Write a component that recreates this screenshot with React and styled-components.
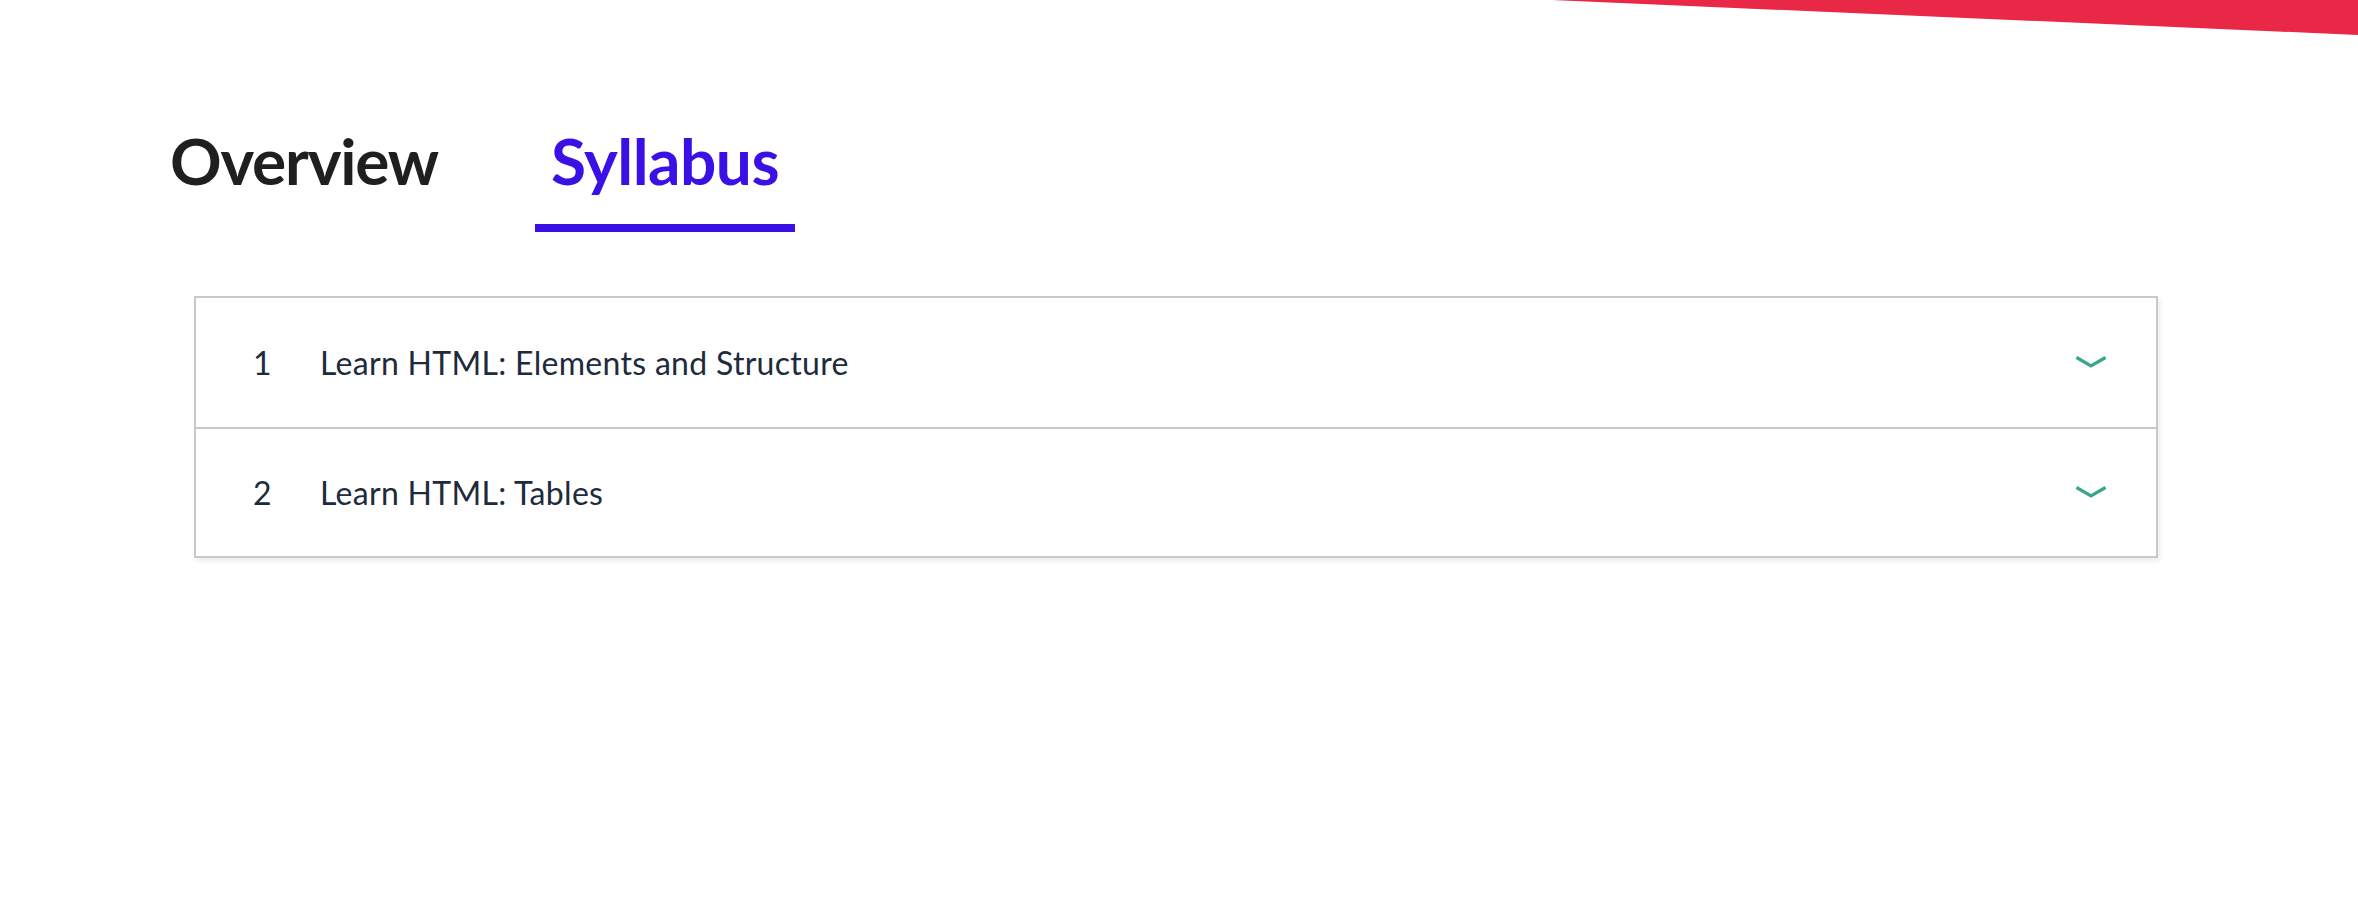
import React from "react";
import styled, { createGlobalStyle } from "styled-components";

const GlobalStyle = createGlobalStyle`
  html, body {
    margin: 0;
    padding: 0;
    background: #ffffff;
    font-family: "Lato", "Liberation Sans", sans-serif;
  }
  * { box-sizing: border-box; }
`;

const Page = styled.div`
  position: relative;
  width: 2358px;
  min-height: 914px;
  overflow: hidden;
  background: #ffffff;
`;

const Slash = styled.svg`
  position: absolute;
  top: 0;
  right: 0;
  display: block;
`;

const Content = styled.main`
  padding: 123px 0 0 154px;
`;

const TabBar = styled.nav`
  display: flex;
  align-items: flex-start;
  gap: 81px;
`;

const Tab = styled.button`
  appearance: none;
  background: none;
  border: 0;
  border-bottom: 8px solid ${(p) => (p.$active ? "#3a10e5" : "transparent")};
  padding: 0 16px 24px;
  margin: 0;
  font-family: "Lato", "Liberation Sans", sans-serif;
  font-weight: 700;
  font-size: 64px;
  line-height: 1.2;
  letter-spacing: ${(p) => (p.$active ? "-0.5px" : "-1.2px")};
  color: ${(p) => (p.$active ? "#3a10e5" : "#1f1f1f")};
  cursor: pointer;
`;

const Syllabus = styled.section`
  margin: 64px 0 0 40px;
  width: 1964px;
  border: 2px solid #c9c9c9;
  box-shadow: 2px 3px 5px rgba(0, 0, 0, 0.08);
  background: #ffffff;
`;

const Row = styled.div`
  display: flex;
  align-items: center;
  height: 129px;
  padding: 0 49px 0 57px;
  border-top: ${(p) => (p.$first ? "0" : "2px solid #c9c9c9")};
  font-family: "Lato", "Liberation Sans", sans-serif;
  font-size: 32px;
  letter-spacing: 0.3px;
  color: #1d2b3c;
`;

const Num = styled.span`
  width: 67px;
  flex: none;
`;

const Title = styled.span`
  flex: 1;
`;

const Chevron = () => (
  <svg width="32" height="12" viewBox="0 0 32 12" aria-hidden="true">
    <polyline
      points="1.5,1.5 16,10 30.5,1.5"
      fill="none"
      stroke="#37a68a"
      strokeWidth="3.2"
    />
  </svg>
);

const lessons = [
  "Learn HTML: Elements and Structure",
  "Learn HTML: Tables",
];

export default function App() {
  return (
    <Page>
      <GlobalStyle />
      <Slash width="806" height="36" viewBox="0 0 806 36" aria-hidden="true">
        <polygon points="0,0 806,0 806,35" fill="#e92747" />
      </Slash>
      <Content>
        <TabBar>
          <Tab>Overview</Tab>
          <Tab $active>Syllabus</Tab>
        </TabBar>
        <Syllabus>
          {lessons.map((t, i) => (
            <Row key={t} $first={i === 0}>
              <Num>{i + 1}</Num>
              <Title>{t}</Title>
              <Chevron />
            </Row>
          ))}
        </Syllabus>
      </Content>
    </Page>
  );
}
